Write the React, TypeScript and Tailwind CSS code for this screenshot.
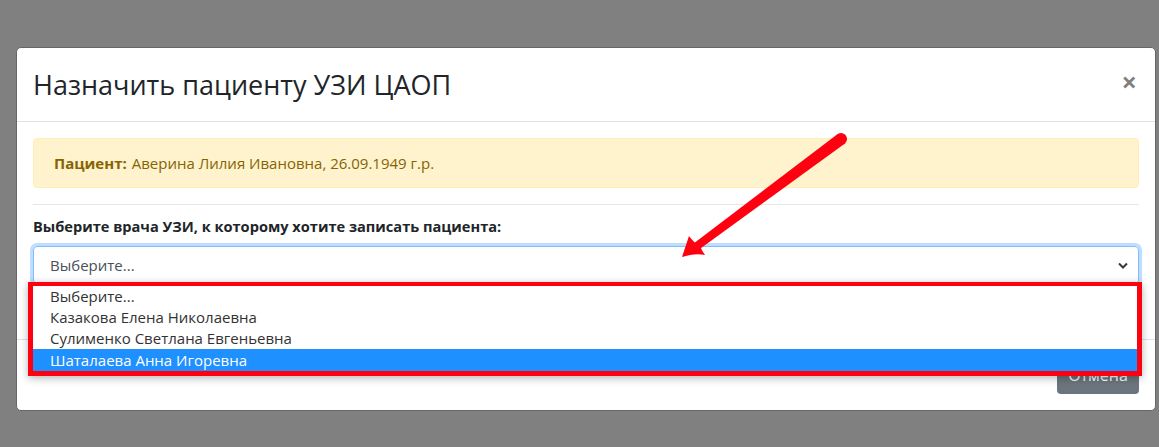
import React from "react";

const doctors = [
  "Выберите...",
  "Казакова Елена Николаевна",
  "Сулименко Светлана Евгеньевна",
  "Шаталаева Анна Игоревна",
];

const font = { fontFamily: '"Open Sans", "Noto Sans", sans-serif' };

export default function App() {
  const selected = 3;

  return (
    <div
      className="relative w-[1159px] h-[447px] overflow-hidden bg-[#808080]"
      style={font}
    >
      <div className="ml-[16px] pt-[47px]">
        <div className="w-[1140px] bg-white border border-[#666666] rounded-[5px]">
          {/* header */}
          <div className="flex items-start justify-between px-4 pt-[16px] pb-4 border-b border-[#dee2e6]">
            <h3 className="text-[27px] leading-[41px] text-[#212529] font-normal">
              Назначить пациенту УЗИ ЦАОП
            </h3>
            <button className="text-[27px] leading-[24px] font-bold text-black/50 mt-[6px] mr-[2px]">
              ×
            </button>
          </div>

          {/* body */}
          <div className="px-4 pt-4 pb-[55px]">
            <div className="h-[50px] flex items-center px-5 bg-[#fff3cd] border border-[#ffeeba] rounded text-[#856404] text-[15px]">
              <b className="font-bold mr-[5px]">Пациент:</b>
              Аверина Лилия Ивановна, 26.09.1949 г.р.
            </div>
            <hr className="mt-4 mb-[9px] border-t border-[#e6e6e6]" />
            <label className="block text-[14.6px] leading-[24px] font-bold text-[#212529] mb-2">
              Выберите врача УЗИ, к которому хотите записать пациента:
            </label>
            <div className="relative">
              <div className="h-[38px] flex items-center justify-between pl-4 pr-[10px] border border-[#80bdff] rounded shadow-[0_0_0_3px_rgba(0,123,255,0.25)] text-[15px] text-[#495057]">
                <span>Выберите...</span>
                <svg width="10" height="7" viewBox="0 0 10 7">
                  <path
                    d="M1 1.5 L5 5.5 L9 1.5"
                    fill="none"
                    stroke="#343a40"
                    strokeWidth="2"
                  />
                </svg>
              </div>

              {/* open list, framed by the red annotation */}
              <div className="absolute left-[-5px] top-[36px] w-[1114px] border-[5px] border-t-4 border-[#ff0010] bg-white shadow-[0_2px_8px_rgba(0,0,0,0.3)] z-10">
                {doctors.map((d, i) => (
                  <div
                    key={d}
                    className={
                      i === selected
                        ? "h-[22px] leading-[22px] pl-[17px] text-[15px] bg-[#1e90ff] text-white"
                        : "h-[21px] leading-[21px] pl-[17px] text-[15px] text-[#333]"
                    }
                  >
                    {d}
                  </div>
                ))}
              </div>
            </div>
          </div>

          {/* footer */}
          <div className="flex justify-end px-4 pt-4 pb-4 border-t border-[#dee2e6]">
            <button className="h-[38px] w-[82px] rounded bg-[#6c757d] text-white text-[16px]">
              Отмена
            </button>
          </div>
        </div>
      </div>

      {/* red arrow annotation */}
      <svg
        className="absolute inset-0 pointer-events-none z-20"
        width="1159"
        height="447"
        viewBox="0 0 1159 447"
      >
        <circle cx="841" cy="139" r="6" fill="#ff0010" />
        <polygon
          points="844.6,143.8 837.4,134.2 694.6,242.8 699.4,249.2"
          fill="#ff0010"
        />
        <path
          d="M682 257 L689 236 Q694 243 700 246 Q702 251 705 255 Q694 253 682 257 Z"
          fill="#ff0010"
        />
      </svg>
    </div>
  );
}
